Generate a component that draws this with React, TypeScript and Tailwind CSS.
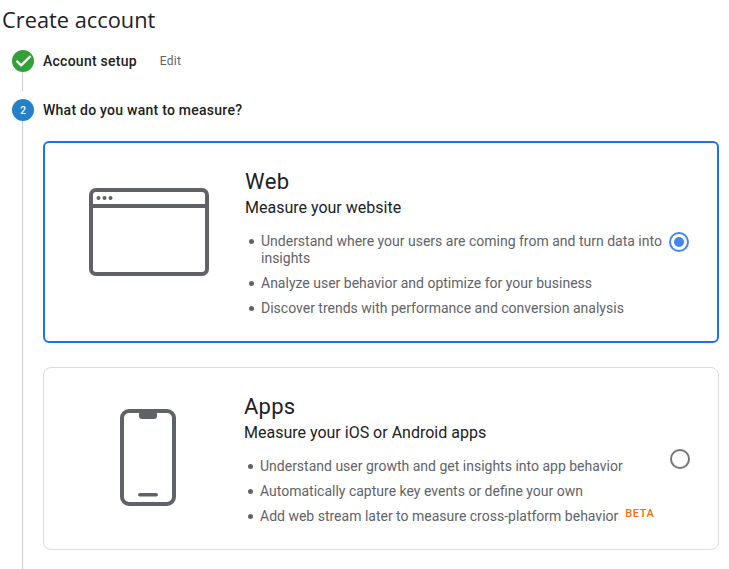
import { Check } from 'lucide-react'

const webPoints = [
  'Understand where your users are coming from and turn data into insights',
  'Analyze user behavior and optimize for your business',
  'Discover trends with performance and conversion analysis',
]

function WebIcon() {
  return (
    <svg width="120" height="88" viewBox="0 0 120 88" fill="none">
      <rect x="2" y="2" width="116" height="84" rx="5" stroke="#5f6368" strokeWidth="4" />
      <rect x="2" y="16" width="116" height="4" fill="#5f6368" />
      <circle cx="9.5" cy="10" r="2" fill="#5f6368" />
      <circle cx="15.5" cy="10" r="2" fill="#5f6368" />
      <circle cx="21.5" cy="10" r="2" fill="#5f6368" />
    </svg>
  )
}

function PhoneIcon() {
  return (
    <svg width="56" height="97" viewBox="0 0 56 97" fill="none">
      <rect x="2" y="2" width="52" height="93" rx="7" stroke="#5f6368" strokeWidth="4" />
      <path d="M19 3h18v4a3 3 0 0 1-3 3H22a3 3 0 0 1-3-3z" fill="#5f6368" />
      <rect x="18" y="84" width="20" height="3.5" rx="1.75" fill="#5f6368" />
    </svg>
  )
}

function Bullet({ children }: { children: React.ReactNode }) {
  return (
    <li className="flex text-[14px] leading-[17px] text-[#5f6368] mb-[7.75px]">
      <span className="w-[5px] h-[5px] rounded-full bg-[#5f6368] mt-[6px] ml-[4px] mr-[7px] shrink-0" />
      <span>{children}</span>
    </li>
  )
}

export default function App() {
  return (
    <div className="w-[729px] h-[569px] overflow-hidden bg-white font-['Roboto',sans-serif] text-[#202124]">
      <h1 className="font-['Open_Sans',sans-serif] text-[21.8px] leading-[28px] pt-[6px] pl-[2px]">Create account</h1>

      {/* Step 1 */}
      <div className="flex mt-[16px] pl-[12px] mb-[8px]">
        <div className="w-[22px] flex flex-col items-center shrink-0">
          <div className="w-[22px] h-[22px] rounded-full bg-[#34a038] flex items-center justify-center">
            <Check size={19} strokeWidth={3} color="white" />
          </div>
          <div className="w-px h-[19px] bg-[#cccccc] mr-[1px]" />
        </div>
        <div className="flex items-start ml-[9px] h-[22px] pt-[1px]">
          <span className="text-[14px] leading-[20px] font-medium tracking-[0.25px]">Account setup</span>
          <span className="text-[12px] leading-[20px] tracking-[0.25px] text-[#5f6368] ml-[23px]">Edit</span>
        </div>
      </div>

      {/* Step 2 */}
      <div className="flex pl-[12px]">
        <div className="w-[22px] flex flex-col items-center shrink-0">
          <div className="w-[22px] h-[22px] rounded-full bg-[#2480c9] text-white text-[10px] font-medium flex items-center justify-center">
            2
          </div>
          <div className="w-px h-[448px] bg-[#cccccc] mr-[1px]" />
        </div>
        <div className="ml-[9px] w-[676px]">
          <div className="text-[14px] leading-[20px] font-medium tracking-[0.25px] pt-[1px]">What do you want to measure?</div>

          <div className="mt-[21px] h-[202px] rounded-[6px] border-2 border-[#1a73e8] flex">
            <div className="w-[200px] flex justify-center items-start pt-[45px] pl-[8px] shrink-0">
              <WebIcon />
            </div>
            <div className="w-[426px] pt-[25px] shrink-0">
              <div className="text-[22px] leading-[28px] tracking-[0.5px]">Web</div>
              <div className="text-[16px] leading-[22px] mt-[1px]">Measure your website</div>
              <ul className="mt-[14px]">
                {webPoints.map((p) => (
                  <Bullet key={p}>{p}</Bullet>
                ))}
              </ul>
            </div>
            <div className="pt-[89px] -ml-[2px]">
              <div className="w-[20px] h-[20px] rounded-full border-2 border-[#4285f4] flex items-center justify-center">
                <div className="w-[10px] h-[10px] rounded-full bg-[#4285f4]" />
              </div>
            </div>
          </div>

          <div className="mt-[24px] h-[183px] rounded-[8px] border border-[#dadce0] flex">
            <div className="w-[200px] flex justify-center items-start pt-[41px] pl-[8px] shrink-0">
              <PhoneIcon />
            </div>
            <div className="w-[425px] pt-[25px] shrink-0">
              <div className="text-[22px] leading-[28px] tracking-[0.25px]">Apps</div>
              <div className="text-[16px] leading-[22px] mt-[1px]">Measure your iOS or Android apps</div>
              <ul className="mt-[14px]">
                <Bullet>Understand user growth and get insights into app behavior</Bullet>
                <Bullet>Automatically capture key events or define your own</Bullet>
                <Bullet>
                  Add web stream later to measure cross-platform behavior
                  <span className="text-[11px] leading-[12px] font-medium tracking-[0.6px] text-[#e8710a] ml-[7px] align-[4px]">BETA</span>
                </Bullet>
              </ul>
            </div>
            <div className="pt-[81px] pl-[1px]">
              <div className="w-[20px] h-[20px] rounded-full border-2 border-[#757575]" />
            </div>
          </div>
        </div>
      </div>
    </div>
  )
}
